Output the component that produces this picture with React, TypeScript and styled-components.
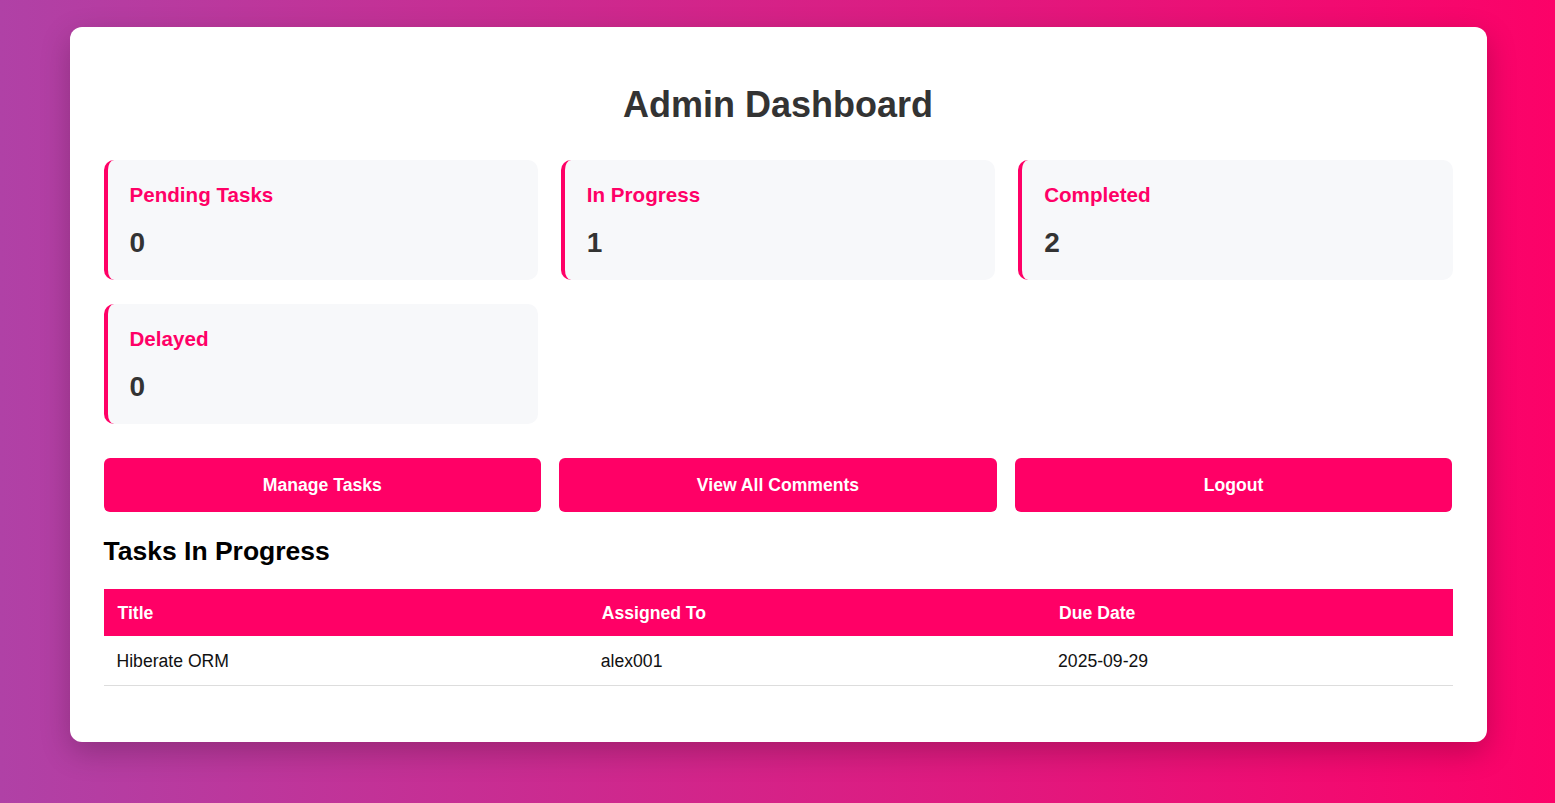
import React from "react";
import styled, { createGlobalStyle } from "styled-components";

const GlobalStyle = createGlobalStyle`
  html, body {
    margin: 0;
    padding: 0;
  }
  body {
    font-family: "Liberation Sans", Arial, sans-serif;
    background: linear-gradient(to right, #b041a6, #fc0268);
    min-height: 803px;
  }
  * { box-sizing: border-box; }
`;

const Page = styled.div`
  display: flex;
  justify-content: center;
  padding: 27px 0 61px 1px;
`;

const Card = styled.main`
  width: 1417px;
  background: #ffffff;
  border-radius: 12px;
  box-shadow: 0 10px 30px rgba(0, 0, 0, 0.22);
  padding: 34px;
`;

const Title = styled.h1`
  margin: 23px 0 34px;
  text-align: center;
  font-size: 36px;
  line-height: 42px;
  font-weight: 700;
  color: #333333;
`;

const StatGrid = styled.section`
  display: grid;
  grid-template-columns: repeat(3, 1fr);
  gap: 24px 23px;
`;

const StatCard = styled.div`
  height: 120px;
  background: #f7f8fa;
  border-left: 4px solid #ff0066;
  border-radius: 10px;
  padding: 23px 22px;
  display: flex;
  flex-direction: column;
  gap: 20px;
`;

const StatLabel = styled.h3`
  margin: 0;
  font-size: 20.6px;
  line-height: 24px;
  font-weight: 700;
  color: #ff0066;
`;

const StatValue = styled.p`
  margin: 0;
  font-size: 28px;
  line-height: 32px;
  font-weight: 700;
  color: #333333;
`;

const ButtonRow = styled.div`
  display: grid;
  grid-template-columns: repeat(3, 1fr);
  gap: 18px;
  margin-top: 34px;
`;

const ActionButton = styled.button`
  height: 54px;
  border: none;
  border-radius: 6px;
  background: #ff0066;
  color: #ffffff;
  font-family: "Liberation Sans", Arial, sans-serif;
  font-size: 17.6px;
  font-weight: 700;
  cursor: pointer;
`;

const SectionTitle = styled.h2`
  margin: 24px 0 23px;
  font-size: 26.5px;
  line-height: 30px;
  font-weight: 700;
  color: #000000;
`;

const Table = styled.table`
  width: 100%;
  border-collapse: collapse;
  margin-bottom: 22px;
`;

const HeadCell = styled.th<{ $w: string }>`
  width: ${(p) => p.$w};
  background: #ff0066;
  color: #ffffff;
  text-align: left;
  font-size: 17.6px;
  line-height: 20px;
  font-weight: 700;
  padding: 13.5px 14px;
`;

const Cell = styled.td`
  font-size: 17.6px;
  line-height: 20px;
  color: #111111;
  padding: 14.5px 13px;
  border-bottom: 1px solid #dddddd;
`;

const stats = [
  { label: "Pending Tasks", value: 0 },
  { label: "In Progress", value: 1 },
  { label: "Completed", value: 2 },
  { label: "Delayed", value: 0 },
];

const rows = [{ title: "Hiberate ORM", assignee: "alex001", due: "2025-09-29" }];

export default function App() {
  return (
    <>
      <GlobalStyle />
      <Page>
        <Card>
          <Title>Admin Dashboard</Title>
          <StatGrid>
            {stats.map((s) => (
              <StatCard key={s.label}>
                <StatLabel>{s.label}</StatLabel>
                <StatValue>{s.value}</StatValue>
              </StatCard>
            ))}
          </StatGrid>
          <ButtonRow>
            <ActionButton>Manage Tasks</ActionButton>
            <ActionButton>View All Comments</ActionButton>
            <ActionButton>Logout</ActionButton>
          </ButtonRow>
          <SectionTitle>Tasks In Progress</SectionTitle>
          <Table>
            <thead>
              <tr>
                <HeadCell $w="35.9%">Title</HeadCell>
                <HeadCell $w="33.9%">Assigned To</HeadCell>
                <HeadCell $w="30.2%">Due Date</HeadCell>
              </tr>
            </thead>
            <tbody>
              {rows.map((r) => (
                <tr key={r.title}>
                  <Cell>{r.title}</Cell>
                  <Cell>{r.assignee}</Cell>
                  <Cell>{r.due}</Cell>
                </tr>
              ))}
            </tbody>
          </Table>
        </Card>
      </Page>
    </>
  );
}
